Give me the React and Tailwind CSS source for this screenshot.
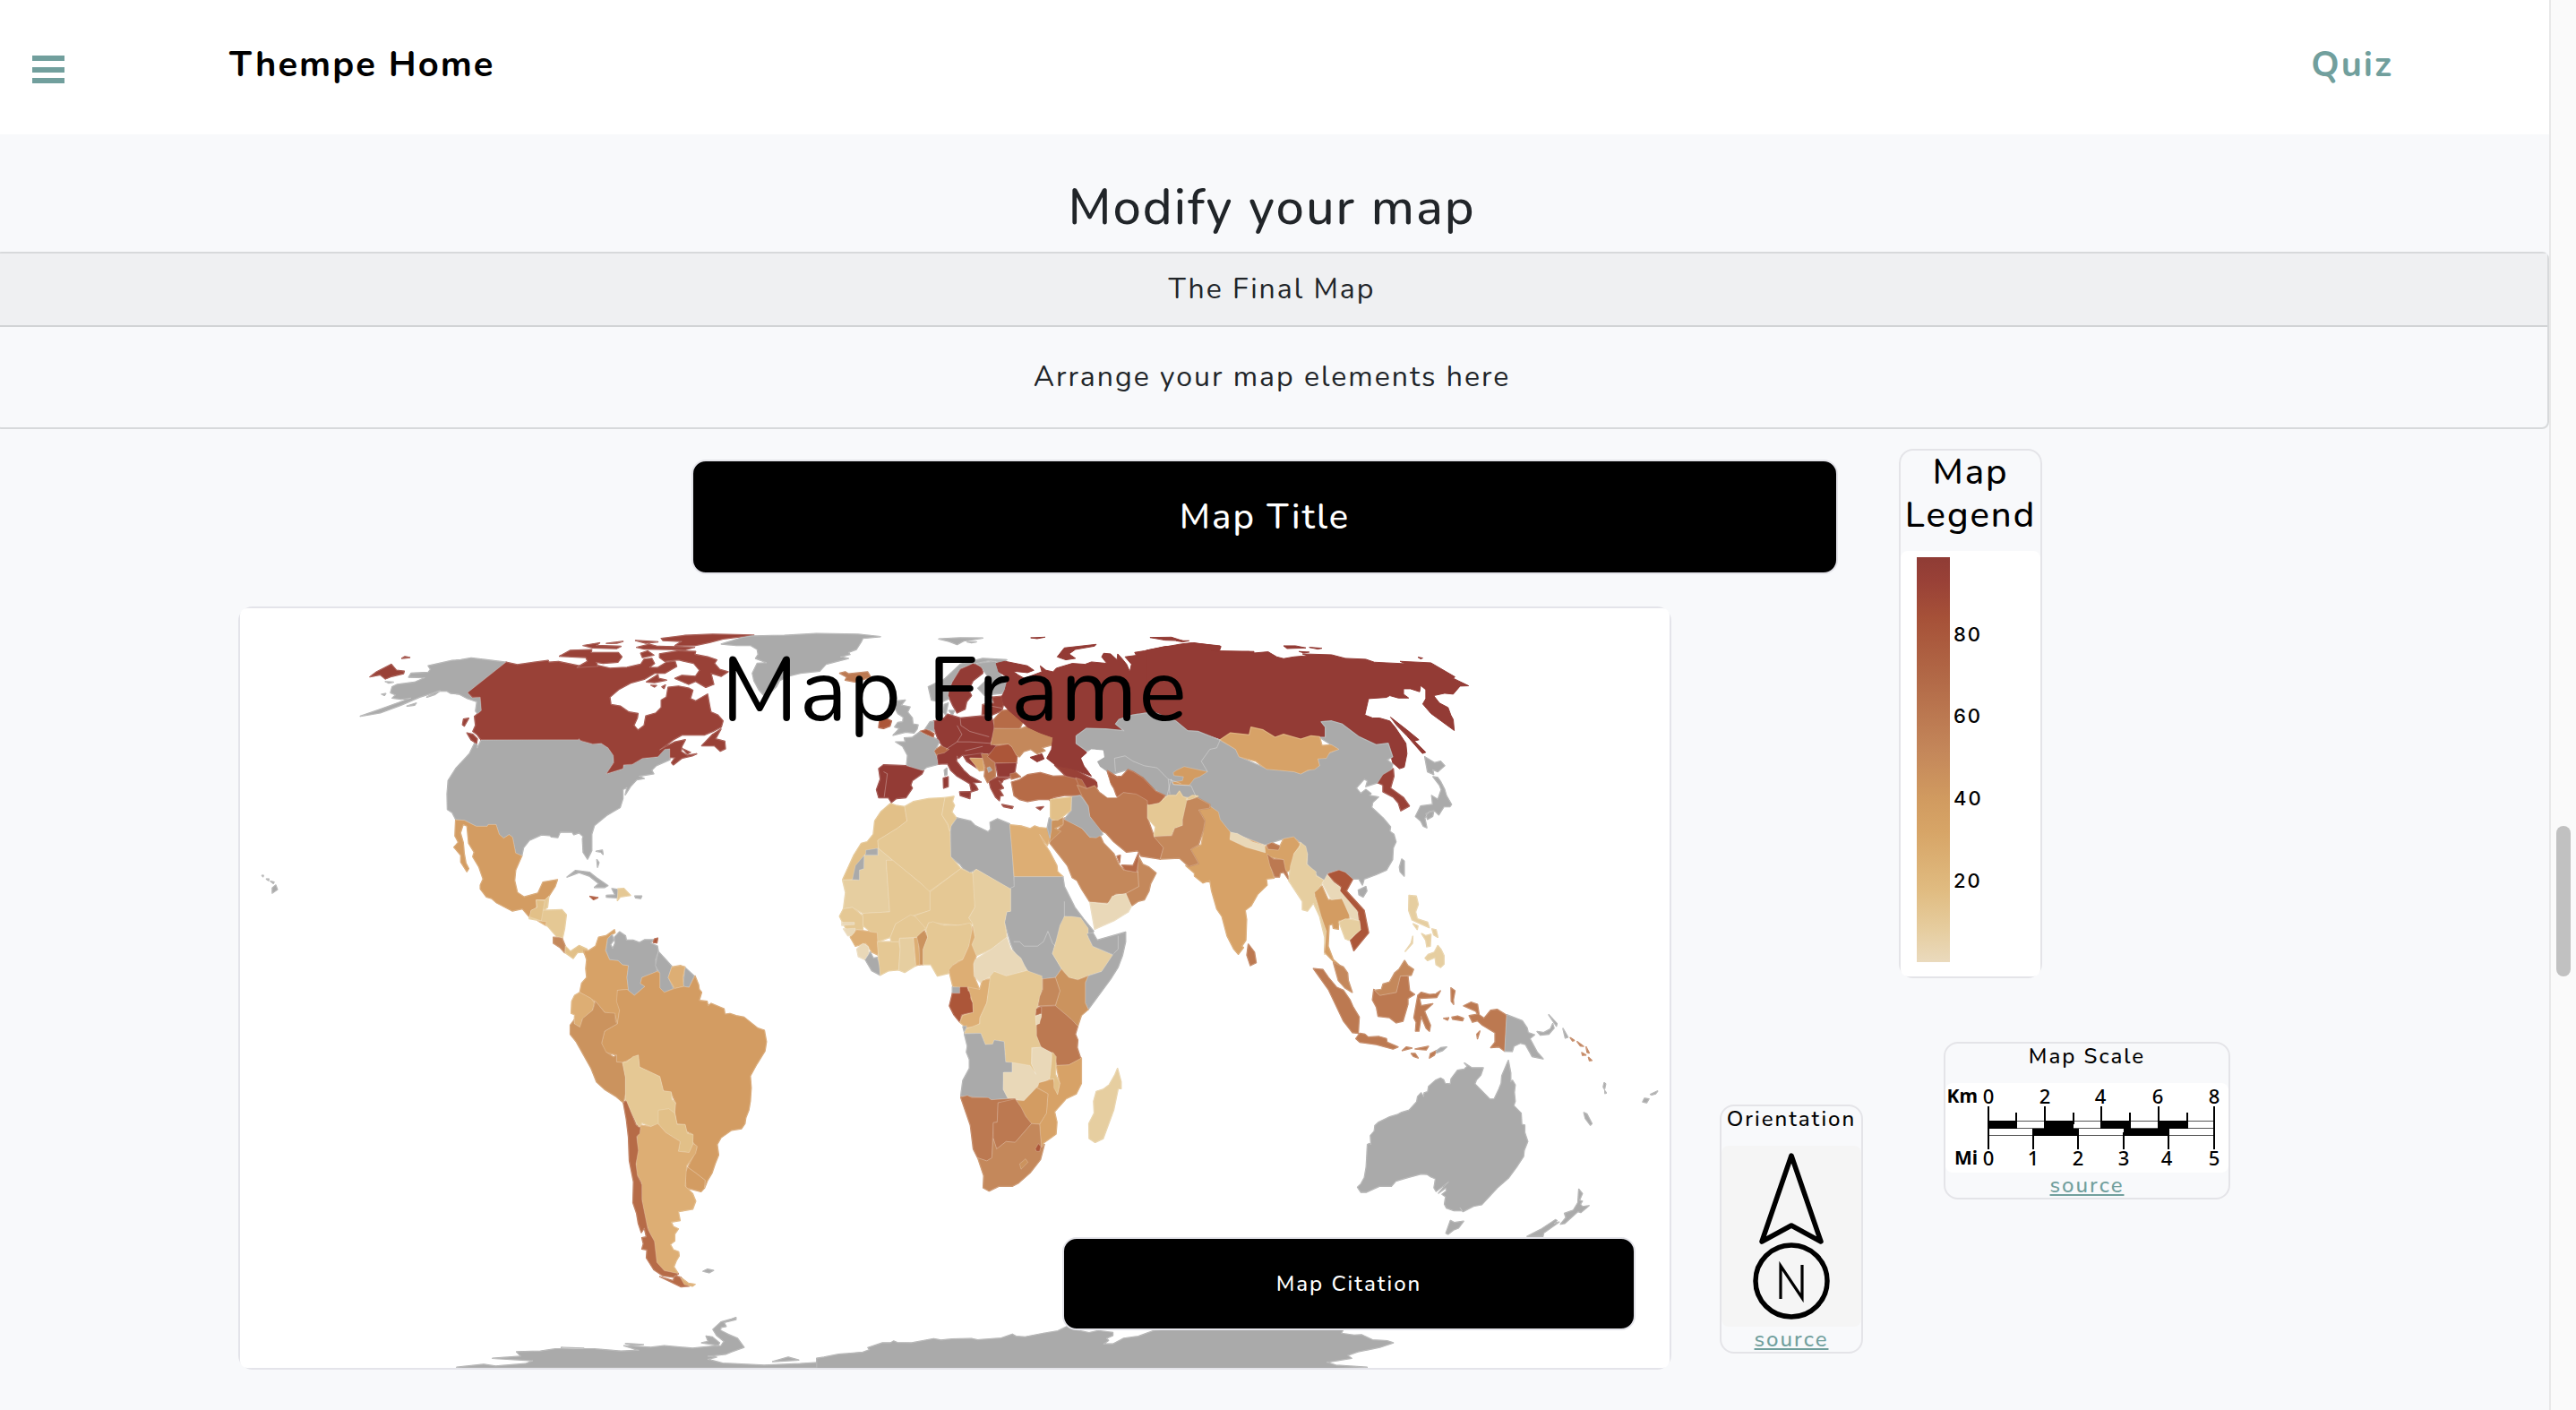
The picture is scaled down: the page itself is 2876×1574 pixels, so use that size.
const GRAY = "#aaaaaa";
const WINE = "#933b35";
const BRICK = "#994137";
const RUST = "#ac5639";
const COPPER = "#b66b47";
const CLAY = "#bc7951";
const SIENNA = "#c4885b";
const OCHRE = "#cb935e";
const AMBER = "#d39c62";
const HONEY = "#d7a267";
const GOLD = "#ddae74";
const STRAW = "#e2c088";
const WHEAT = "#e5c894";
const SAND = "#e6cea0";
const CREAM = "#e9d8b8";

// Each tile holds the outlines of one part of the world in its own units.
const tiles = [
  {
    t: "translate(260 670) scale(.38265 .33333)",
    s: [
      [GRAY, "M797 208 740 200 695 194 665 200 640 202 570 220 577 232 570 242 520 245 513 258 560 260 530 275 480 282 465 290 460 310 475 318 465 328 490 332 520 328 480 345 425 368 372 389 430 378 490 352 545 325 600 305 625 305 635 312 660 315 685 330 712 340 708 372 716 382 727 370 722 325 698 327 685 310z"],
      [GRAY, "M508 355 535 345 530 352zM566 325 590 310 605 303 590 316zM434 315 446 313 442 319zM445 273 468 275 455 278z"],
      [GRAY, "M724 468 1010 466 1015 472 1050 482 1075 480 1095 495 1112 522 1110 545 1090 582 1138 565 1140 552 1165 550 1195 530 1240 525 1260 497 1275 498 1275 535 1235 555 1222 570 1228 582 1185 590 1200 598 1178 602 1160 625 1145 652 1150 628 1138 635 1138 665 1130 695 1090 722 1055 755 1047 785 1047 840 1035 868 1022 845 1020 800 1022 792 1010 780 995 786 990 778 955 777 948 796 930 794 925 789 900 787 865 805 848 830 843 857 825 848 816 795 806 786 790 798 777 785 768 752 745 752 742 758 710 758 675 738 650 735 640 712 626 702 625 650 628 605 650 565 690 515 705 480 711 482 713 496 722 475z"],
      [GRAY, "M975 928 1000 906 1040 912 1060 930 1094 957 1085 963 1055 963 1068 950 1040 925 1010 913zM1090 990 1115 988 1106 967 1125 970 1122 998 1090 996zM1173 992 1193 992 1190 1000 1175 998zM1060 842 1078 838 1080 852 1074 845zM1062 870 1068 880 1064 895zM115 965 125 955 130 970 115 982zM98 935 105 935 104 940zM85 923 89 923 88 927zM110 942 120 945 118 950z"],
      [BRICK, "M797 208 830 216 880 208 920 202 922 208 950 206 985 214 1010 220 1060 218 1100 228 1150 225 1190 215 1200 198 1222 195 1230 212 1215 225 1240 226 1265 208 1290 205 1295 222 1260 245 1230 245 1200 265 1160 278 1125 300 1100 325 1103 350 1130 355 1155 375 1182 380 1180 395 1170 420 1182 436 1200 420 1205 388 1235 378 1250 360 1250 335 1265 325 1270 292 1300 288 1330 295 1342 302 1335 330 1350 338 1385 315 1392 360 1395 375 1415 385 1430 405 1425 425 1400 440 1375 452 1310 452 1285 468 1245 502 1290 475 1320 468 1310 490 1308 508 1325 520 1353 515 1340 522 1310 530 1285 552 1280 545 1290 528 1275 527 1275 498 1260 500 1240 525 1195 530 1165 550 1140 552 1138 565 1090 582 1112 545 1110 520 1095 495 1075 480 1050 482 1015 470 1010 464 1008 468 724 468 712 450 700 440 708 420 705 390 725 370 722 325 700 325 685 310z"],
      [BRICK, "M953 188 985 168 1047 166 1045 176 1125 176 1135 190 1123 208 1080 212 1060 208 1065 222 1003 226 1035 205 1030 192 990 190zM1022 152 1070 143 1060 152 1132 155 1120 162 1050 160zM1250 128 1320 118 1400 114 1520 117 1430 130 1390 142 1350 152 1290 152 1310 138 1255 135zM1175 135 1240 140 1205 144zM1178 158 1215 148 1240 155 1347 158 1320 166 1200 164zM1190 178 1210 170 1228 184 1195 192zM1090 145 1138 138 1120 144z"],
      [BRICK, "M1245 180 1300 170 1350 172 1348 182 1385 190 1412 200 1405 212 1420 232 1445 240 1425 255 1395 245 1403 282 1380 292 1350 272 1330 282 1290 262 1310 252 1350 255 1362 235 1345 212 1300 200 1260 205 1245 192zM1207 274 1240 250 1242 262 1265 268 1230 276zM1220 285 1236 286 1230 291zM1252 290 1262 284 1258 296z"],
      [BRICK, "M1368 488 1400 450 1424 432 1408 465 1435 473 1437 498 1422 506 1405 488zM1312 498 1335 510 1326 515zM683 445 700 450 713 465 711 480 695 468zM670 417 673 399 688 396 675 422zM400 257 420 240 462 215 477 235 500 238 498 246 465 255 445 264 430 250zM493 195 502 189 516 192z"],
      [AMBER, "M650 737 675 738 710 758 742 758 745 752 768 752 777 785 790 798 806 786 816 795 825 848 843 857 825 905 822 940 830 980 850 995 890 982 905 945 947 937 940 960 922 992 910 1005 885 1005 885 1030 865 1062 845 1035 815 1042 770 1015 755 1000 740 995 722 968 722 955 730 935 718 895 700 860 704 845 688 815 683 757 672 752 664 780 672 812 675 850 680 882 688 900 683 910 665 878 665 855 645 828 658 812 648 790z"],
      [WHEAT, "M885 1005 910 1005 922 992 918 1030 905 1040 960 1038 973 1055 968 1100 962 1132 945 1128 920 1095 900 1075 865 1068 870 1040 888 1030z"],
      [STRAW, "M885 1005 910 1008 905 1040 900 1075 865 1062 870 1040 888 1030z"],
      [GOLD, "M890 1075 915 1078 912 1090z"],
      [SIENNA, "M935 1130 960 1132 970 1160 968 1182 955 1165 935 1150z"],
      [STRAW, "M970 1160 985 1178 1010 1158 1033 1170 1035 1198 1022 1180 1005 1182 993 1201 970 1182z"],
      [WHEAT, "M1123 968 1140 966 1160 990 1130 995 1122 1007z"],
      [RUST, "M1042 993 1065 997 1052 1004z"],
    ],
  },
  {
    t: "translate(560 1030) scale(.33333)",
    s: [
      [HONEY, "M378 25 380 35 370 40 355 55 348 95 362 125 390 128 405 142 425 145 420 185 425 225 388 228 390 250 395 295 388 340 380 310 345 302 315 265 262 235 268 205 285 185 282 155 285 125 275 95 292 95 315 80 325 50 350 45z"],
      [GRAY, "M370 40 375 60 365 75 372 88 380 70 378 50 395 32 415 45 418 60 440 60 462 68 480 58 508 58 500 70 522 80 525 98 515 125 520 165 470 185 465 205 480 215 445 245 425 230 420 185 425 145 405 142 390 128 362 125 350 95 355 55z"],
      [GRAY, "M525 98 550 125 570 148 558 185 575 222 545 235 530 220 530 170 515 145zM615 152 645 180 628 218 608 215zM675 1170 690 1163 710 1167 695 1175z"],
      [GOLD, "M570 150 600 145 614 150 607 185 610 215 580 222 558 185z"],
      [RUST, "M508 67 512 56 523 53 520 69z"],
      [AMBER, "M420 225 445 245 480 215 465 205 470 185 520 165 530 170 530 220 545 235 580 222 610 215 628 218 648 180 660 210 662 225 670 235 662 262 688 265 692 280 702 272 745 290 748 308 765 306 785 313 812 318 858 355 880 362 887 400 882 432 855 475 833 515 836 555 833 600 828 630 818 655 815 675 803 692 770 697 735 722 722 745 727 780 715 810 705 840 690 865 680 890 668 903 618 890 615 840 640 790 655 755 640 735 640 710 620 700 615 678 588 675 580 635 583 605 568 570 542 565 530 517 462 485 458 445 405 470 385 468 385 445 345 435 335 405 345 365 388 340 395 295 385 265 388 228z"],
      [GOLD, "M262 235 300 255 310 270 305 295 270 325 265 352 243 340 245 310 233 305 235 265 245 245z"],
      [OCHRE, "M315 265 345 302 380 305 382 335 388 340 345 365 335 405 350 435 375 452 385 445 385 468 405 470 415 520 415 575 408 605 385 585 345 560 318 535 300 490 250 400 230 375 230 345 243 328 243 340 262 352 272 322 305 295z"],
      [WHEAT, "M405 470 420 468 440 450 458 445 462 485 530 517 542 565 568 568 570 595 583 605 580 640 585 675 525 678 500 685 470 672 460 688 435 640 415 595 415 520z"],
      [STRAW, "M525 630 560 625 580 640 588 678 615 678 622 708 642 712 640 750 628 772 592 768 598 735 550 705 525 675z"],
      [GOLD, "M465 680 500 685 523 675 550 705 598 735 592 768 628 772 642 742 655 750 650 775 620 815 615 885 640 910 650 935 640 962 592 970 598 1000 568 1005 575 1020 592 1028 580 1045 580 1068 565 1080 575 1098 593 1105 595 1118 585 1135 577 1155 592 1178 550 1175 515 1140 510 1075 480 1000 470 930 468 870 450 840 450 770 455 715 465 690z"],
      [COPPER, "M408 605 418 598 435 640 450 680 465 690 463 708 452 718 458 765 450 810 455 850 470 880 470 930 478 970 490 1030 512 1070 520 1140 545 1168 592 1178 575 1190 540 1185 510 1165 485 1125 487 1098 470 1095 475 1078 470 1058 485 1055 478 1025 468 1040 458 1010 452 975 440 940 442 870 428 800 425 720 418 660z"],
      [COPPER, "M530 1188 575 1202 580 1185 600 1190 628 1220 600 1222z"],
      [GOLD, "M598 1190 625 1210 648 1214 640 1220 612 1215z"],
      [GRAY, "M-150 1492 -60 1482 -20 1488 80 1480 105 1470 -30 1462 65 1455 50 1440 130 1438 180 1430 310 1430 400 1438 460 1435 410 1420 500 1425 545 1420 640 1428 700 1422 735 1420 745 1405 720 1385 708 1365 735 1340 770 1330 785 1325 785 1332 745 1342 752 1355 735 1358 733 1368 760 1382 790 1395 812 1425 770 1440 750 1448 690 1455 720 1458 690 1465 740 1478 880 1485 1000 1480 1125 1472 1060 1463 1110 1455 1200 1443 1210 1443 1210 1494 -150 1494zM670 1410 692 1405 685 1387 705 1390 730 1410 725 1418zM908 1473 960 1458 995 1468zM415 1412 475 1416 440 1418zM200 1426 275 1428 240 1430z"],
    ],
  },
  {
    t: "translate(920 1440) scale(.40816 .33333)",
    s: [[GRAY, "M-20 232 0 228 40 218 105 212 125 203 120 196 160 180 182 180 190 174 200 179 240 180 300 166 320 171 350 167 405 166 420 170 485 164 515 151 525 158 550 160 600 148 640 140 665 125 690 137 725 146 750 139 790 145 790 155 772 165 778 172 764 184 790 184 820 165 860 158 905 138 950 134 1000 136 1400 134 1420 136 1415 148 1450 154 1470 153 1500 170 1540 173 1557 180 1520 195 1460 210 1432 222 1443 232 1375 245 1400 255 1485 262 1400 265 -20 265z"]],
  },
  {
    t: "translate(1480 1170) scale(.33333)",
    s: [
      [GRAY, "M612 43 620 85 620 115 626 110 635 125 632 150 635 180 630 195 655 220 657 258 667 260 667 285 677 315 665 345 663 365 640 400 612 438 575 470 522 527 495 532 460 550 450 537 457 547 430 547 405 538 398 525 402 500 390 492 405 480 403 470 378 488 412 450 370 482 363 470 368 440 350 432 340 425 320 424 270 437 235 448 220 465 180 465 160 474 137 485 118 485 107 468 118 458 130 435 136 400 140 325 146 322 152 325 150 295 163 280 165 262 178 250 215 232 240 225 255 217 280 210 305 182 308 165 320 152 328 165 330 152 342 148 345 130 368 110 385 102 395 108 400 120 418 122 420 105 442 76 465 72 475 63 465 52 490 68 528 68 520 92 505 108 500 122 550 173 565 172 580 140 588 120 590 95z"],
      [GRAY, "M418 580 432 587 462 582 445 605 428 612 410 626 403 622zM848 475 860 490 850 512 860 515 853 525 860 533 882 530 855 553 845 550 800 590 787 592 805 570 800 556 830 545 845 520zM675 633 720 610 770 577 775 580 765 590 782 585 730 622 728 633z"],
      [GRAY, "M865 218 875 222 892 255 887 260 870 238zM1062 182 1068 170 1083 172 1075 185zM1088 157 1112 146 1105 155 1092 159zM933 118 938 122 934 140 930 132zM935 145 940 152 936 154z"],
    ],
  },
  {
    t: "translate(920 860) scale(.33333)",
    s: [
      [STRAW, "M222 112 240 118 270 122 278 170 245 195 180 235 182 262 150 268 133 287 120 320 95 366 62 368 100 285 125 245 145 240 165 215 170 170 190 140z"],
      [WHEAT, "M270 122 300 105 350 95 405 92 395 150 415 185 422 210 425 290 458 330 350 408 325 380 230 302 182 262 180 235 245 195 278 170z"],
      [WHEAT, "M405 92 435 88 430 105 437 118 428 140 445 162 428 182 422 205 415 180 395 150z"],
      [GRAY, "M445 160 490 170 505 185 550 207 558 197 556 175 580 163 622 180 630 260 637 390 622 398 510 332 488 343 465 328 455 315 425 290 425 190z"],
      [GOLD, "M622 183 660 187 690 196 705 187 720 192 748 195 757 225 748 252 722 215 740 250 755 272 780 320 782 340 800 357 637 357z"],
      [GRAY, "M637 357 800 357 805 390 825 430 840 460 870 500 903 540 885 560 880 545 860 500 805 490 800 530 775 580 765 615 795 665 775 695 735 700 690 682 635 605 625 580 605 510 612 475 625 473 625 395 637 390z"],
      [SAND, "M62 368 118 368 118 335 133 330 135 285 182 285 182 262 230 302 208 302 220 475 130 480 95 460 65 465 72 410z"],
      [GRAY, "M140 268 178 262 178 284 140 284zM133 287 133 330 118 335 118 368 95 366 105 320z"],
      [WHEAT, "M230 302 325 380 355 408 355 470 300 487 240 515 222 560 180 575 160 545 130 520 130 480 220 475 208 302z"],
      [WHEAT, "M458 330 488 343 498 345 510 385 505 460 485 495 500 515 450 520 400 515 350 512 340 535 305 510 305 487 355 470 355 408z"],
      [SAND, "M498 345 510 332 625 398 625 473 612 475 605 510 612 560 560 600 510 622 490 580 505 560 498 515 485 495 505 460z"],
      [CREAM, "M612 560 625 600 660 630 680 672 610 690 570 675 557 690 525 712 502 690 500 640 560 600z"],
      [WHEAT, "M65 465 95 460 130 490 130 535 75 535 52 490z"],
      [CREAM, "M60 510 102 510 102 518 60 520zM65 532 105 530 100 555 80 555z"],
      [GOLD, "M88 560 110 535 178 545 182 620 160 610 148 590 140 580 105 590z"],
      [CREAM, "M110 600 130 580 148 592 150 615 138 635 115 625z"],
      [GRAY, "M138 635 155 610 165 630 178 628 188 660 188 687 160 672z"],
      [WHEAT, "M178 575 250 575 255 600 250 670 215 673 188 687 182 625z"],
      [SAND, "M253 563 300 562 303 600 308 655 270 678 250 670 255 600z"],
      [GOLD, "M300 562 315 560 322 652 308 655z"],
      [OCHRE, "M310 555 335 537 347 560 332 600 332 652 320 652 320 600z"],
      [WHEAT, "M222 560 240 515 290 485 305 490 340 530 310 560 253 563 250 575 225 575z"],
      [WHEAT, "M350 512 365 508 400 520 450 520 490 512 500 545 485 590 465 635 450 640 430 655 415 682 380 690 358 652 332 652 332 600 347 560 342 535z"],
      [GOLD, "M498 525 505 560 495 585 510 622 500 650 502 690 522 738 432 727 418 670 430 655 465 635 485 590z"],
      [GRAY, "M430 727 455 727 455 748 430 748z"],
      [RUST, "M455 727 480 727 482 740 495 742 490 765 498 780 500 812 480 815 460 820 455 845 435 820 420 790 430 748 455 748z"],
      [GOLD, "M482 727 522 735 530 705 557 700 545 780 522 830 520 850 500 862 475 862 455 845 465 822 500 812 498 780z"],
      [WHEAT, "M557 690 570 675 610 690 680 672 730 690 730 735 715 790 708 820 715 890 728 930 695 930 695 985 710 1015 660 990 608 978 603 910 570 905 565 920 540 920 525 882 470 882 475 868 522 850 522 830 545 780z"],
      [GRAY, "M470 884 525 882 540 920 565 918 570 905 603 910 608 978 630 980 630 1013 603 1013 600 1070 618 1102 560 1105 545 1098 458 1092 465 1040 487 1000 487 970 477 945 480 925zM465 860 478 856 470 878z"],
      [SAND, "M805 490 830 490 860 495 885 530 885 560 900 590 968 620 930 675 880 690 850 703 820 695 795 665 765 615 775 580 790 520z"],
      [GRAY, "M880 548 900 545 915 570 1010 543 1010 575 1000 620 985 660 960 700 885 802 875 780 875 712 885 690 930 675 968 618 900 590z"],
      [OCHRE, "M775 695 795 668 820 695 850 703 885 690 875 712 875 780 885 802 862 822 850 858 828 835 775 790 790 740z"],
      [SIENNA, "M733 700 775 695 790 740 775 788 718 790 722 760 733 735z"],
      [CLAY, "M728 792 775 790 828 835 850 858 842 885 850 905 848 930 860 968 820 988 780 990 770 950 728 930 712 890 712 855 728 830z"],
      [COPPER, "M710 800 728 793 728 815 710 822z"],
      [CREAM, "M708 825 728 818 722 850 710 854z"],
      [CREAM, "M600 1013 630 1013 630 980 690 990 710 1020 695 985 697 932 728 928 762 948 762 1010 755 1035 715 1060 670 1108 640 1105 615 1100 600 1070z"],
      [HONEY, "M778 990 820 988 862 965 862 1050 845 1085 810 1102 772 1145 780 1180 777 1220 735 1250 728 1270 722 1187 745 1150 750 1085 715 1065 720 1048 768 1035 782 1087 790 1050z"],
      [STRAW, "M765 945 778 960 775 1020 790 1050 782 1087 770 1065 770 1035 756 1035z"],
      [AMBER, "M645 1108 670 1108 712 1065 750 1085 745 1150 722 1187 690 1185 675 1160z"],
      [CLAY, "M458 1097 480 1090 495 1098 550 1098 560 1105 640 1100 645 1108 583 1115 580 1180 567 1182 562 1300 545 1310 515 1300 500 1270 490 1190z"],
      [CLAY, "M583 1115 640 1102 660 1130 675 1160 695 1185 660 1225 640 1248 610 1245 578 1270 567 1235 567 1182 580 1180z"],
      [SIENNA, "M515 1300 545 1310 562 1300 567 1235 578 1270 610 1245 640 1248 695 1185 722 1187 728 1265 738 1255 725 1305 690 1350 650 1385 630 1395 585 1395 553 1411 533 1400 535 1360z"],
      [RUST, "M708 1270 718 1252 726 1262 722 1278 712 1278z"],
      [OCHRE, "M655 1320 675 1303 683 1315 660 1338z"],
      [SAND, "M983 1000 995 1045 995 1068 985 1068 970 1140 935 1235 908 1248 888 1235 887 1185 905 1150 903 1110 912 1077 935 1070 955 1055 975 1020z"],
    ],
  },
  {
    t: "translate(840 670) scale(.35714 .33333)",
    s: [
      [GRAY, "M-97 147 -50 152 -5 152 15 165 18 182 10 195 45 210 15 212 0 245 5 270 20 300 35 318 55 312 75 290 85 270 110 255 150 245 210 238 230 215 300 195 275 190 305 182 300 175 325 165 340 140 345 128 400 122 330 114 200 112 100 118 0 120 -30 125 -60 135zM583 130 650 126 720 127 690 132 660 137 640 149 615 138zM672 140 700 140 685 143z"],
      [GRAY, "M615 330 590 342 560 335 550 290 600 265 650 215 720 195 795 200 780 210 740 202 690 215 650 230 625 275z"],
      [WINE, "M615 300 625 275 650 232 690 212 720 225 720 245 690 270 676 300 685 320 670 340 665 365 640 378 625 350 612 320z"],
      [GRAY, "M715 225 700 212 760 205 770 240 800 285 780 312 725 318 705 295 740 260zM600 350 612 345 608 365 605 385 597 375zM615 370 632 370 625 385z"],
      [CLAY, "M273 245 290 240 300 247 360 240 370 258 320 274 290 268 295 258z"],
      [GRAY, "M452 338 478 335 465 352 493 358 485 375 500 395 502 415 518 418 515 432 505 445 480 442 440 453 460 430 445 425 455 410 470 408 472 392 455 380 445 360z"],
      [RUST, "M395 427 398 400 415 395 435 405 430 422 410 430z"],
      [GRAY, "M448 475 478 475 475 462 500 460 525 440 545 452 587 470 570 505 583 550 545 560 530 573 482 555 485 520 470 490zM540 432 555 408 572 405 570 440z"],
      [RUST, "M525 440 545 434 568 448 565 460z"],
      [WINE, "M395 565 410 552 480 555 535 572 530 582 500 605 495 620 500 630 480 662 450 665 435 678 425 662 395 662 388 635 400 600z"],
      [WINE, "M568 405 600 395 610 382 650 395 700 390 745 385 760 430 745 480 768 492 740 515 720 515 690 520 655 520 645 530 640 522 638 540 660 570 680 590 715 610 690 612 700 625 705 635 685 642 680 615 640 590 620 570 610 548 580 550 578 515 600 500 580 465 568 430z"],
      [WINE, "M648 643 682 642 680 665 650 655zM597 597 612 592 612 625 598 630zM660 522 720 512 722 530 680 528 705 565 670 540z"],
      [GRAY, "M600 570 608 563 608 585 602 588z"],
      [COPPER, "M568 505 590 488 615 500 600 512 575 518z"],
      [HONEY, "M678 530 720 530 722 550 725 570 710 572z"],
      [CLAY, "M715 515 735 515 745 535 758 545 760 590 735 612 725 590 728 560z"],
      [GRAY, "M733 562 742 558 750 570 738 578z"],
      [RUST, "M735 525 760 490 800 482 820 500 828 522 825 547 760 545z"],
      [WINE, "M760 547 825 545 820 580 800 592 768 592z"],
      [BRICK, "M740 607 765 594 805 595 785 602 780 612 770 605 785 630 772 635 784 655 775 656 772 672 760 660 745 630zM780 685 815 692 812 698 785 692zM888 695 910 692 900 703z"],
      [BRICK, "M720 350 755 345 750 325 780 322 785 350 780 370 745 387 718 383z"],
      [COPPER, "M780 370 800 368 820 380 845 410 835 432 755 430 755 400z"],
      [SIENNA, "M755 430 840 430 860 422 900 445 940 460 938 485 905 495 915 505 890 515 870 500 848 508 835 525 825 520 810 490 800 482 745 485z"],
      [COPPER, "M805 582 822 578 838 592 810 600zM810 610 835 602 860 585 900 578 940 590 1000 588 1015 592 1025 610 1030 655 975 655 940 662 935 680 928 668 895 668 860 675 835 668 818 655z"],
      [BRICK, "M945 553 1000 562 1045 590 1080 608 1078 625 1068 652 1040 625 1010 598 980 590z"],
      [COPPER, "M1010 595 1030 602 1045 630 1020 620z"],
    ],
  },
  {
    t: "translate(840 670) scale(.35714 .33333)",
    plain: true,
    s: [
      [WINE, "M762 212 790 205 860 220 880 235 860 243 815 238 830 250 850 262 880 250 905 240 900 220 918 235 940 240 950 228 1000 212 1040 215 1060 207 1108 212 1092 190 1098 178 1120 180 1140 200 1142 180 1155 195 1170 215 1180 240 1185 215 1165 190 1200 185 1195 175 1225 170 1290 155 1350 152 1380 143 1465 155 1460 170 1568 172 1568 460 1465 465 1420 445 1370 440 1330 405 1225 378 1150 400 1145 415 1165 440 1110 432 1045 430 1015 450 1015 480 1045 510 1035 550 1060 590 1000 565 950 555 920 530 935 500 940 460 900 445 860 425 845 410 800 368 785 350 780 322 790 300 800 260 770 240z"],
      [WINE, "M953 190 975 160 1075 148 1070 154 1010 165 990 180 1010 195 980 200zM1243 125 1310 124 1345 136 1290 134zM1325 136 1365 136 1345 140zM870 126 915 124 890 129zM868 527 905 515 912 532 890 542z"],
    ],
  },
  {
    t: "translate(1280 670) scale(.38265 .33333)",
    plain: true,
    s: [
      [WINE, "M100 147 130 143 215 153 210 165 190 168 225 174 300 172 305 178 355 173 380 190 400 196 430 190 470 186 455 180 540 183 580 195 640 198 665 208 700 210 755 213 740 205 830 210 900 257 895 262 940 287 915 288 895 315 870 312 838 320 855 345 880 360 888 385 895 400 898 437 830 380 806 348 815 330 815 300 800 286 797 307 770 297 750 297 750 315 765 328 735 328 710 320 700 326 648 330 637 385 660 395 680 395 710 405 725 425 757 480 760 515 752 560 738 565 718 545 715 530 705 480 670 485 620 458 570 415 520 405 522 460 480 455 450 466 400 452 375 460 340 440 305 430 300 452 245 445 215 465 150 440 120 438 85 405 0 400 0 168z"],
      [WINE, "M712 392 760 435 795 468 782 472 815 510 805 514 760 455 730 420zM400 153 435 153 465 160 410 162zM475 158 512 161 500 164zM792 191 806 194 800 197zM445 172 475 174 460 177z"],
    ],
  },
  {
    t: "translate(1280 670) scale(.38265 .33333)",
    s: [
      [GRAY, "M-205 455 -205 480 -175 505 -150 500 -145 515 -135 520 -170 560 -120 590 -60 570 0 615 50 655 120 660 185 690 215 740 245 778 345 820 400 800 430 795 450 812 470 850 470 885 495 920 520 940 530 915 560 905 600 935 620 935 630 955 635 935 670 920 700 905 718 870 720 830 728 810 722 785 710 775 712 760 690 730 657 695 660 678 677 660 650 655 655 648 640 635 625 648 612 630 635 600 645 605 640 625 675 612 700 585 715 570 718 550 702 535 718 525 705 480 670 485 620 458 570 415 540 405 510 408 522 425 522 460 505 460 560 500 500 530 505 555 450 582 430 575 350 565 270 525 260 500 215 470 150 440 120 438 85 405 20 375 -40 385 -80 400 -90 415 -65 438 -120 432 -175 430z"],
      [HONEY, "M215 468 245 445 300 452 305 426 340 435 375 460 400 450 450 466 480 455 505 458 512 487 540 485 562 500 535 510 525 530 500 532 505 555 490 568 470 570 450 583 430 575 350 567 320 540 270 525 260 500z"],
      [AMBER, "M78 578 88 570 110 558 130 563 178 575 155 592 140 598 125 620 80 618 75 610 105 605 108 592 80 588z"],
      [HONEY, "M185 690 210 710 215 735 245 778 345 822 355 835 385 835 400 800 430 793 448 820 430 850 425 900 412 910 400 900 400 870 355 860 372 932 350 935 352 955 325 985 305 1025 288 1040 292 1070 290 1140 278 1160 283 1165 268 1187 255 1170 235 1125 220 1060 205 1035 190 975 185 940 165 948 140 925 140 915 115 890 150 885 130 835 160 820 170 745 150 705z"],
      [CREAM, "M245 778 265 782 310 810 345 822 347 847 290 828 243 803z"],
      [CLAY, "M352 822 365 813 390 825 385 838 355 835z"],
      [CLAY, "M352 850 370 868 400 870 405 900 418 942 400 912 390 915 388 928 375 928 360 890z"],
      [CLAY, "M297 1153 315 1180 320 1215 303 1225 293 1190z"],
      [SAND, "M430 850 445 830 450 812 465 825 470 850 467 885 495 910 495 925 518 938 490 990 500 1020 512 1060 525 1110 520 1187 520 1130 505 1060 487 1015 470 1042 455 1038 455 1010 415 940 420 890z"],
      [AMBER, "M490 980 512 958 530 1005 570 1000 595 1050 590 1068 560 1075 560 1103 545 1100 543 1086 533 1090 530 1160 545 1205 560 1220 570 1240 545 1210 520 1180 525 1110 510 1060z"],
      [CREAM, "M513 948 528 918 545 945 568 965 615 1040 618 1075 595 1065 570 1000 540 1005 530 985z"],
      [RUST, "M528 918 562 905 580 912 602 935 583 975 635 1040 648 1115 605 1175 595 1140 612 1118 625 1105 618 1045 565 975 568 960 550 945z"],
      [SAND, "M562 1080 580 1068 622 1075 625 1105 590 1140 580 1135z"],
      [BRICK, "M675 612 690 585 720 565 722 590 712 630 750 662 767 690 742 706 735 680 720 660 690 642 690 620z"],
      [GRAY, "M812 525 840 545 858 540 870 555 850 575 835 568 838 584 820 575zM836 592 850 595 858 608 870 635 875 655 890 685 885 692 868 692 853 720 840 705 825 708 812 730 818 763 808 758 800 740 785 725 800 690 835 685 832 655 850 668 860 635 855 620zM815 715 838 708 835 725 820 735zM738 895 745 868 752 875 752 925 740 910zM618 972 640 960 643 975 632 995 620 988z"],
      [SAND, "M766 990 787 992 793 1020 785 1045 790 1068 820 1080 825 1098 790 1080 775 1072 765 1040zM755 1177 772 1150 777 1127 776 1150zM803 1118 815 1125 830 1120 828 1160 818 1162 815 1140zM833 1102 845 1105 850 1130 838 1122zM813 1200 822 1188 840 1180 850 1158 860 1172 868 1192 868 1220 858 1231 845 1222 842 1198 820 1208zM778 1085 792 1092 790 1104z"],
    ],
  },
  {
    t: "translate(840 670) scale(.35714 .33333)",
    s: [
      ["#ffffff", "M1030 530 1060 502 1095 505 1098 525 1075 540 1085 560 1105 575 1115 600 1125 640 1140 662 1110 662 1085 640 1080 610 1058 580 1040 555z"],
      [COPPER, "M1110 572 1140 592 1155 590 1175 568 1190 575 1220 595 1260 640 1290 655 1275 680 1240 688 1215 665 1190 650 1160 645 1140 660 1130 630 1118 610z"],
      [CLAY, "M1015 620 1045 632 1070 622 1085 645 1110 662 1140 662 1160 645 1200 650 1235 672 1235 730 1255 790 1285 830 1275 868 1215 858 1205 840 1170 845 1130 810 1105 780 1085 770 1055 725 1050 690 1030 655z"],
      [WHEAT, "M1235 688 1270 680 1300 655 1325 655 1335 640 1345 658 1360 665 1360 710 1345 735 1345 755 1320 765 1310 788 1255 793 1260 760 1235 730zM1355 668 1375 655 1393 657 1370 670z"],
      [SIENNA, "M1358 672 1390 662 1430 685 1430 697 1395 703 1415 740 1410 770 1395 820 1370 835 1395 883 1365 893 1335 865 1275 868 1285 830 1255 793 1312 790 1320 765 1345 755 1345 735z"],
      [SIENNA, "M930 815 935 790 970 755 975 730 1030 765 1055 795 1085 785 1098 815 1130 850 1145 885 1160 905 1205 912 1205 855 1220 885 1240 895 1262 915 1245 950 1240 975 1225 1005 1205 1010 1185 1025 1165 985 1135 985 1112 1015 1055 1012 1030 970 1015 940 1000 930 985 890 960 855z"],
      [COPPER, "M1155 888 1190 890 1207 848 1207 875 1200 912 1165 905zM1140 858 1150 855 1148 880z"],
      [CREAM, "M1055 1012 1110 1020 1125 992 1168 983 1185 1025 1175 1045 1130 1075 1070 1103z"],
      [OCHRE, "M930 810 935 740 970 730 972 752 945 765 965 775 945 795z"],
      [GRAY, "M998 660 1025 655 1050 690 1055 725 1085 765 1095 785 1075 797 1055 795 1030 765 975 735 998 705z"],
      [STRAW, "M932 668 998 660 995 705 955 738 932 735z"],
      [GRAY, "M922 762 928 730 935 735 935 770 930 797z"],
    ],
  },
  {
    t: "translate(1300 860) scale(.3699 .33333)",
    s: [
      [SIENNA, "M510 645 540 660 553 680 555 705 567 745 545 730 525 705z"],
      [CLAY, "M450 665 478 668 495 695 520 728 540 738 560 770 570 795 588 828 585 882 568 880 540 840 495 735zM578 900 590 882 605 885 615 895 648 893 670 900 672 912 705 928 690 935 640 920 590 912zM632 735 650 755 700 745 712 690 735 690 740 740 755 752 735 765 735 785 720 842 700 847 680 830 645 825 640 795 628 770z"],
      [SIENNA, "M635 738 655 735 660 717 680 710 695 680 708 668 725 638 735 655 752 668 745 688 712 690 700 745 650 755z"],
      [CLAY, "M765 755 775 745 800 752 820 750 833 740 822 762 770 765 775 790 810 783 785 808 803 855 800 875 790 865 775 825 768 875 758 875 760 845 753 830zM865 730 877 740 872 770 873 785 866 775zM843 832 858 830 855 838zM868 828 885 824 903 832 900 840 870 835zM903 790 925 778 945 785 950 820 965 832 985 805 1005 802 1033 822 1027 942 1010 928 985 930 998 912 998 880 960 855 945 840 930 845 920 823 945 818 940 808zM718 940 730 928 747 932zM757 935 797 926 790 938zM745 950 757 950 766 965 752 960zM800 965 803 950 822 940 815 955zM943 885 952 875 945 900zM1225 897 1237 906 1232 908zM1246 910 1265 926 1255 924zM1273 928 1282 948 1276 946zM1260 947 1272 955 1262 956zM1280 963 1290 973 1283 974z"],
      [GRAY, "M1033 820 1080 840 1095 865 1098 880 1117 887 1103 900 1125 945 1143 968 1110 960 1090 920 1075 915 1055 925 1050 943 1027 942zM1125 876 1145 880 1165 868 1172 850 1176 865 1160 885 1135 888zM1160 820 1185 850 1183 858zM1203 866 1218 895 1210 898zM820 942 835 930 852 928 840 940 822 948z"],
    ],
  },
];

const borders = [
  ["translate(840 670) scale(.35714 .33333)", "M1135 575 1132 530 1165 522 1190 540 1225 555 1265 562 1300 600 1305 650M1300 600 1340 615M640 420 655 450 640 475 605 500M650 397 652 420 680 440 740 458M640 475 680 475 745 480M665 505 720 490M410 575 422 582 412 660M722 350 780 362M1205 910 1208 960 1165 985"],
  ["translate(1280 670) scale(.38265 .33333)", "M178 575 160 540 185 500 205 495 215 468M60 655 72 600 78 618 130 622 145 660"],
  ["translate(920 860) scale(.33333)", "M635 575 655 575 670 590 715 590 735 575 750 540 765 580 775 590M805 440 805 490M970 615 985 600 985 555"],
  ["translate(560 1030) scale(.33333)", "M622 820 650 840 682 865 680 890"],
];

function WorldMap() {
  return (
    <svg
      viewBox="268 679 1596 849"
      preserveAspectRatio="none"
      className="block h-full w-full rounded-lg bg-white"
      role="img"
      aria-label="World choropleth map"
    >
      {tiles.map((tile, i) => (
        <g key={i} transform={tile.t} strokeLinejoin="round">
          {/* same-colour outline closes the seams between neighbours */}
          {tile.s.map(([fill, d], j) => (
            <path key={j} d={d} fill={fill} stroke={fill} vectorEffect="non-scaling-stroke" strokeWidth={tile.plain ? "1" : "1.5"} />
          ))}
          {!tile.plain &&
            tile.s.map(([fill, d], j) => (
              <path key={`f${j}`} d={d} fill={fill} stroke="#ffffff" strokeOpacity="0.2" vectorEffect="non-scaling-stroke" strokeWidth="1" />
            ))}
        </g>
      ))}
      {borders.map(([t, d], i) => (
        <g key={i} transform={t} fill="none" stroke="#ffffff" strokeOpacity="0.3">
          <path d={d} vectorEffect="non-scaling-stroke" strokeWidth="1" />
        </g>
      ))}
    </svg>
  );
}

const legendLabels = [
  { value: "80", y: 95 },
  { value: "60", y: 186 },
  { value: "40", y: 278 },
  { value: "20", y: 370 },
];

function LegendBar() {
  return (
    <svg viewBox="0 0 156 475" className="block w-full rounded-lg bg-white" role="img" aria-label="Colour ramp">
      <defs>
        <linearGradient id="ramp" x1="0" y1="0" x2="0" y2="1">
          <stop offset="0" stopColor="#8f3c35" />
          <stop offset="0.06" stopColor="#994137" />
          <stop offset="0.15" stopColor="#a65138" />
          <stop offset="0.3" stopColor="#b26947" />
          <stop offset="0.48" stopColor="#c4875a" />
          <stop offset="0.6" stopColor="#d19b60" />
          <stop offset="0.68" stopColor="#d7a567" />
          <stop offset="0.82" stopColor="#e0bb80" />
          <stop offset="0.92" stopColor="#e6cd9f" />
          <stop offset="1" stopColor="#eadabd" />
        </linearGradient>
      </defs>
      <rect x="18" y="7" width="37" height="452" fill="url(#ramp)" />
      {legendLabels.map((l) => (
        <text key={l.value} x="59" y={l.y + 6} fontSize="22" fontWeight="500" className="font-['Inter',sans-serif]">
          {l.value}
        </text>
      ))}
    </svg>
  );
}

function ScaleBar() {
  return (
    <svg viewBox="0 0 316 100" className="block w-full rounded-lg bg-white font-['Noto_Sans',sans-serif] tracking-normal" role="img" aria-label="Scale bar in kilometres and miles">
      <path d="M48 42.500H300M48 50.500H300M48 58.500H300" fill="none" stroke="#555" strokeWidth="1" />
      <path d="M48 42h32v9H48zM110 42h33v9h-33zM173 42h34v9h-34zM237 42h34v9h-34zM97 51h52v8H97zM199 51h51v8h-51z" />
      <path
        d="M48 26V74M300 26V74M111 26V46M174 26V46M238 26V46M79 33V46M143 33V46M206 33V46M270 33V46M98 55V74M148 55V74M199 55V74M249 55V74"
        fill="none"
        stroke="#000"
        strokeWidth="2"
      />
      <g fontSize="22" fontWeight="500" textAnchor="middle">
        <text x="48" y="23">0</text>
        <text x="111" y="23">2</text>
        <text x="173" y="23">4</text>
        <text x="237" y="23">6</text>
        <text x="300" y="23">8</text>
        <text x="48" y="92">0</text>
        <text x="98" y="92">1</text>
        <text x="148" y="92">2</text>
        <text x="199" y="92">3</text>
        <text x="247" y="92">4</text>
        <text x="300" y="92">5</text>
      </g>
      <g fontSize="21" fontWeight="700" textAnchor="end">
        <text x="36" y="22">Km</text>
        <text x="36" y="91">Mi</text>
      </g>
    </svg>
  );
}

function NorthArrow() {
  return (
    <svg viewBox="0 0 156 202" className="block w-full rounded-lg bg-[#f5f5f5]" role="img" aria-label="North arrow">
      <g fill="none" stroke="#000" strokeLinejoin="round">
        <path d="M78 11 L111 107 L78 89 L45 107 Z" strokeWidth="5.500" />
        <circle cx="78" cy="151" r="40" strokeWidth="5.500" />
        <path d="M66 171V134L90 170V133" strokeWidth="3.200" strokeLinejoin="miter" />
      </g>
    </svg>
  );
}

function App() {
  return (
    <div className="flex min-h-screen overflow-hidden bg-[#f8f9fb] font-['Nunito','Open_Sans','Noto_Sans',sans-serif] tracking-[2px] text-[#212529]">
      <div className="min-w-0 flex-1">
        <header className="flex h-[150px] items-start bg-white pt-[42px] pr-[174px] pl-9">
          <button type="button" aria-label="Open menu" className="mt-5 block">
            <svg viewBox="0 0 36 32" className="block h-8 w-9" fill="#719f9d">
              <path d="M0 0h36v6H0zM0 13h36v6H0zM0 25h36v6H0z" />
            </svg>
          </button>
          <a href="#home" className="ml-[184px] text-[40px] leading-[60px] font-bold text-black">
            Thempe Home
          </a>
          <a href="#quiz" className="ml-auto text-[40px] leading-[60px] font-bold text-[#719f9d]">
            Quiz
          </a>
        </header>

        <main>
          <section className="-ml-1.5 pt-12 text-center">
            <h2 className="pb-[15px] text-[56px] leading-[68px] font-medium">Modify your map</h2>
            <div className="rounded-lg border-2 border-[#d7d9db]">
              <div className="border-b-2 border-[#d1d3d5] bg-[#eff0f2] py-4 text-[32px] leading-[48px]">The Final Map</div>
              <p className="py-8 text-[32px] leading-[48px]">Arrange your map elements here</p>
            </div>
          </section>

          <section className="relative h-[1095px] text-black" aria-label="Map canvas">
            <div className="absolute top-[198px] left-[266px] h-[852px] w-[1600px] rounded-2xl border-2 border-[#e4e4ea]">
              <WorldMap />
              <h3 className="absolute inset-x-0 top-6 text-center text-[100px] leading-[136px]">Map Frame</h3>
            </div>

            <div className="absolute top-[34px] left-[772px] flex h-32 w-[1280px] items-center justify-center rounded-2xl border-2 border-[#e4e4ea] bg-black text-[40px] leading-[48px] font-medium text-white">
              Map Title
            </div>

            <div className="absolute top-[902px] left-[1186px] flex h-[104px] w-[640px] items-center justify-center rounded-2xl border-2 border-[#e4e4ea] bg-black text-2xl font-medium text-white">
              Map Citation
            </div>

            <div className="absolute top-[22px] left-[2120px] w-40 rounded-2xl border-2 border-[#e4e4e8] text-center">
              <h4 className="mb-4 text-[40px] leading-[48px] font-medium">Map Legend</h4>
              <LegendBar />
            </div>

            <div className="absolute top-[684px] left-[2170px] w-80 rounded-2xl border-2 border-[#e4e4e8] text-center text-2xl leading-7">
              <h4 className="mb-4 font-medium">Map Scale</h4>
              <ScaleBar />
              <a href="#scale-source" className="block font-medium text-[#719f9d] underline">
                source
              </a>
            </div>

            <div className="absolute top-[754px] left-[1920px] w-40 rounded-2xl border-2 border-[#e4e4e8] text-center text-2xl leading-7">
              <h4 className="mb-4 font-medium">Orientation</h4>
              <NorthArrow />
              <a href="#orientation-source" className="block font-medium text-[#719f9d] underline">
                source
              </a>
            </div>
          </section>
        </main>
      </div>

      <div className="w-[30px] shrink-0 border-l-2 border-[#e8e8e8] bg-[#fafafa] pt-[922px]" aria-hidden="true">
        <div className="mx-auto h-[168px] w-4 rounded-full bg-[#c1c1c1]" />
      </div>
    </div>
  );
}

export default App;
